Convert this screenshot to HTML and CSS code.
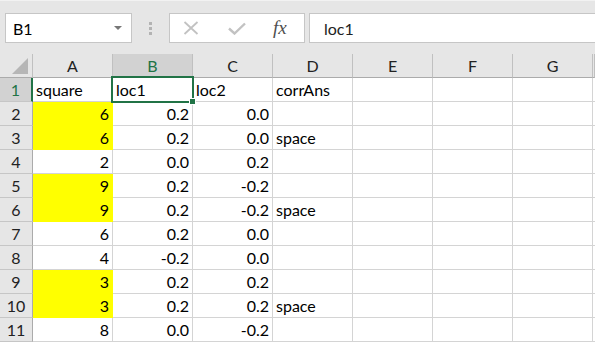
FILE: index.html
```html
<!DOCTYPE html>
<html>
<head>
<title>Sheet1</title>
<link rel="stylesheet" href="styles.css">
</head>
<body>
<div class="toolbar">
	<div class="namebox">
		<span>B1</span>
		<span class="dropdown"></span>
	</div>
	<div class="grip"><i></i><i></i><i></i></div>
	<div class="fxbox">
		<svg class="icon" width="16" height="14" viewBox="0 0 16 14"><path d="M1.5 1 L14.5 13 M14.5 1 L1.5 13" stroke="#c2c2c2" stroke-width="1.8" fill="none"/></svg>
		<svg class="icon" width="18" height="13" viewBox="0 0 18 13"><path d="M1 6.5 L6.5 11.5 L17 1.5" stroke="#c2c2c2" stroke-width="2.4" fill="none"/></svg>
		<span class="fx">fx</span>
	</div>
	<div class="formula">loc1</div>
</div>

<div class="sheet">
	<div class="corner"></div>
	<div class="colhead">A</div>
	<div class="colhead active">B</div>
	<div class="colhead">C</div>
	<div class="colhead">D</div>
	<div class="colhead">E</div>
	<div class="colhead">F</div>
	<div class="colhead">G</div>
	<div class="colhead"></div>

	<div class="rowhead active">1</div>
	<div class="cell">square</div>
	<div class="cell selected">loc1</div>
	<div class="cell">loc2</div>
	<div class="cell">corrAns</div>
	<div class="cell"></div><div class="cell"></div><div class="cell"></div><div class="cell"></div>

	<div class="rowhead">2</div>
	<div class="cell num fill">6</div>
	<div class="cell num">0.2</div>
	<div class="cell num">0.0</div>
	<div class="cell"></div>
	<div class="cell"></div><div class="cell"></div><div class="cell"></div><div class="cell"></div>

	<div class="rowhead">3</div>
	<div class="cell num fill">6</div>
	<div class="cell num">0.2</div>
	<div class="cell num">0.0</div>
	<div class="cell">space</div>
	<div class="cell"></div><div class="cell"></div><div class="cell"></div><div class="cell"></div>

	<div class="rowhead">4</div>
	<div class="cell num">2</div>
	<div class="cell num">0.0</div>
	<div class="cell num">0.2</div>
	<div class="cell"></div>
	<div class="cell"></div><div class="cell"></div><div class="cell"></div><div class="cell"></div>

	<div class="rowhead">5</div>
	<div class="cell num fill">9</div>
	<div class="cell num">0.2</div>
	<div class="cell num">-0.2</div>
	<div class="cell"></div>
	<div class="cell"></div><div class="cell"></div><div class="cell"></div><div class="cell"></div>

	<div class="rowhead">6</div>
	<div class="cell num fill">9</div>
	<div class="cell num">0.2</div>
	<div class="cell num">-0.2</div>
	<div class="cell">space</div>
	<div class="cell"></div><div class="cell"></div><div class="cell"></div><div class="cell"></div>

	<div class="rowhead">7</div>
	<div class="cell num">6</div>
	<div class="cell num">0.2</div>
	<div class="cell num">0.0</div>
	<div class="cell"></div>
	<div class="cell"></div><div class="cell"></div><div class="cell"></div><div class="cell"></div>

	<div class="rowhead">8</div>
	<div class="cell num">4</div>
	<div class="cell num">-0.2</div>
	<div class="cell num">0.0</div>
	<div class="cell"></div>
	<div class="cell"></div><div class="cell"></div><div class="cell"></div><div class="cell"></div>

	<div class="rowhead">9</div>
	<div class="cell num fill">3</div>
	<div class="cell num">0.2</div>
	<div class="cell num">0.2</div>
	<div class="cell"></div>
	<div class="cell"></div><div class="cell"></div><div class="cell"></div><div class="cell"></div>

	<div class="rowhead">10</div>
	<div class="cell num fill">3</div>
	<div class="cell num">0.2</div>
	<div class="cell num">0.2</div>
	<div class="cell">space</div>
	<div class="cell"></div><div class="cell"></div><div class="cell"></div><div class="cell"></div>

	<div class="rowhead">11</div>
	<div class="cell num">8</div>
	<div class="cell num">0.0</div>
	<div class="cell num">-0.2</div>
	<div class="cell"></div>
	<div class="cell"></div><div class="cell"></div><div class="cell"></div><div class="cell"></div>
</div>
</body>
</html>
```

FILE: styles.css
```css
body {
	background-color: #ffffff;
	font-family: Lato, "Noto Sans", sans-serif;
	margin: 0;
	overflow: hidden;
	width: 595px;
	height: 344px;
}

.toolbar {
	align-items: center;
	background-color: #e6e6e6;
	border-top: 1px solid #f2f2f2;
	box-sizing: border-box;
	display: flex;
	height: 54px;
	padding: 12px 0 11px 5px;
}

.namebox {
	align-items: center;
	background-color: #ffffff;
	border: 1px solid #c6c6c6;
	box-sizing: border-box;
	display: flex;
	font-size: 16px;
	height: 30px;
	justify-content: space-between;
	padding: 0 9px 0 7px;
	width: 127px;
}

.namebox .dropdown {
	border-left: 4px solid transparent;
	border-right: 4px solid transparent;
	border-top: 4px solid #777777;
	height: 0;
	width: 0;
}

.grip {
	display: flex;
	flex-direction: column;
	gap: 2px;
	margin: 0 17px;
}

.grip i {
	background-color: #b3b3b3;
	display: block;
	height: 3px;
	width: 3px;
}

.fxbox {
	align-items: center;
	background-color: #ffffff;
	border: 1px solid #c6c6c6;
	box-sizing: border-box;
	display: flex;
	height: 30px;
	padding-left: 13px;
	width: 136px;
}

.fxbox .icon {
	margin-right: 29px;
}

.fx {
	color: #4f4f4f;
	font-family: "Liberation Serif", serif;
	font-size: 19px;
	font-style: italic;
	margin-left: -2px;
}

.formula {
	align-items: center;
	background-color: #ffffff;
	border: 1px solid #c6c6c6;
	border-right: none;
	box-sizing: border-box;
	color: #222222;
	display: flex;
	flex: 1;
	font-size: 16px;
	height: 30px;
	margin-left: 4px;
	padding-left: 14px;
}

.sheet {
	display: grid;
	grid-auto-rows: 24px;
	grid-template-columns: 33px repeat(7, 80px) minmax(0, 1fr);
	width: 595px;
}

.sheet > div {
	box-sizing: border-box;
}

.corner {
	background-color: #e6e6e6;
	border-bottom: 1px solid #ababab;
	border-right: 1px solid #c0c0c0;
	position: relative;
}

.corner::after {
	background-color: #b6b6b6;
	bottom: 3px;
	clip-path: polygon(100% 0, 100% 100%, 0 100%);
	content: "";
	height: 16px;
	position: absolute;
	right: 4px;
	width: 16px;
}

.colhead {
	align-items: center;
	background-color: #e6e6e6;
	border-bottom: 1px solid #ababab;
	border-right: 1px solid #c0c0c0;
	color: #222222;
	display: flex;
	font-size: 16px;
	justify-content: center;
}

.colhead.active {
	background-color: #d2d2d2;
	border-bottom: 2px solid #217346;
	color: #217346;
}

.rowhead {
	align-items: center;
	background-color: #e6e6e6;
	border-bottom: 1px solid #c6c6c6;
	border-right: 1px solid #ababab;
	color: #222222;
	display: flex;
	font-size: 16px;
	justify-content: center;
}

.rowhead.active {
	background-color: #d2d2d2;
	border-right: 2px solid #217346;
	color: #217346;
}

.cell {
	align-items: center;
	border-bottom: 1px solid #d4d4d4;
	border-right: 1px solid #d4d4d4;
	color: #000000;
	display: flex;
	font-size: 16px;
	overflow: hidden;
	padding: 0 3px;
	white-space: nowrap;
}

.cell.num {
	justify-content: flex-end;
}

.cell.fill {
	background-color: #ffff00;
	border-color: #ffff00;
}

.cell.selected {
	overflow: visible;
	position: relative;
}

.cell.selected::before {
	border: 2px solid #217346;
	bottom: -2px;
	content: "";
	left: -2px;
	position: absolute;
	right: -2px;
	top: -2px;
}

.cell.selected::after {
	background-color: #217346;
	border: 1px solid #ffffff;
	bottom: -4px;
	content: "";
	height: 5px;
	position: absolute;
	right: -4px;
	width: 5px;
	z-index: 1;
}
```
